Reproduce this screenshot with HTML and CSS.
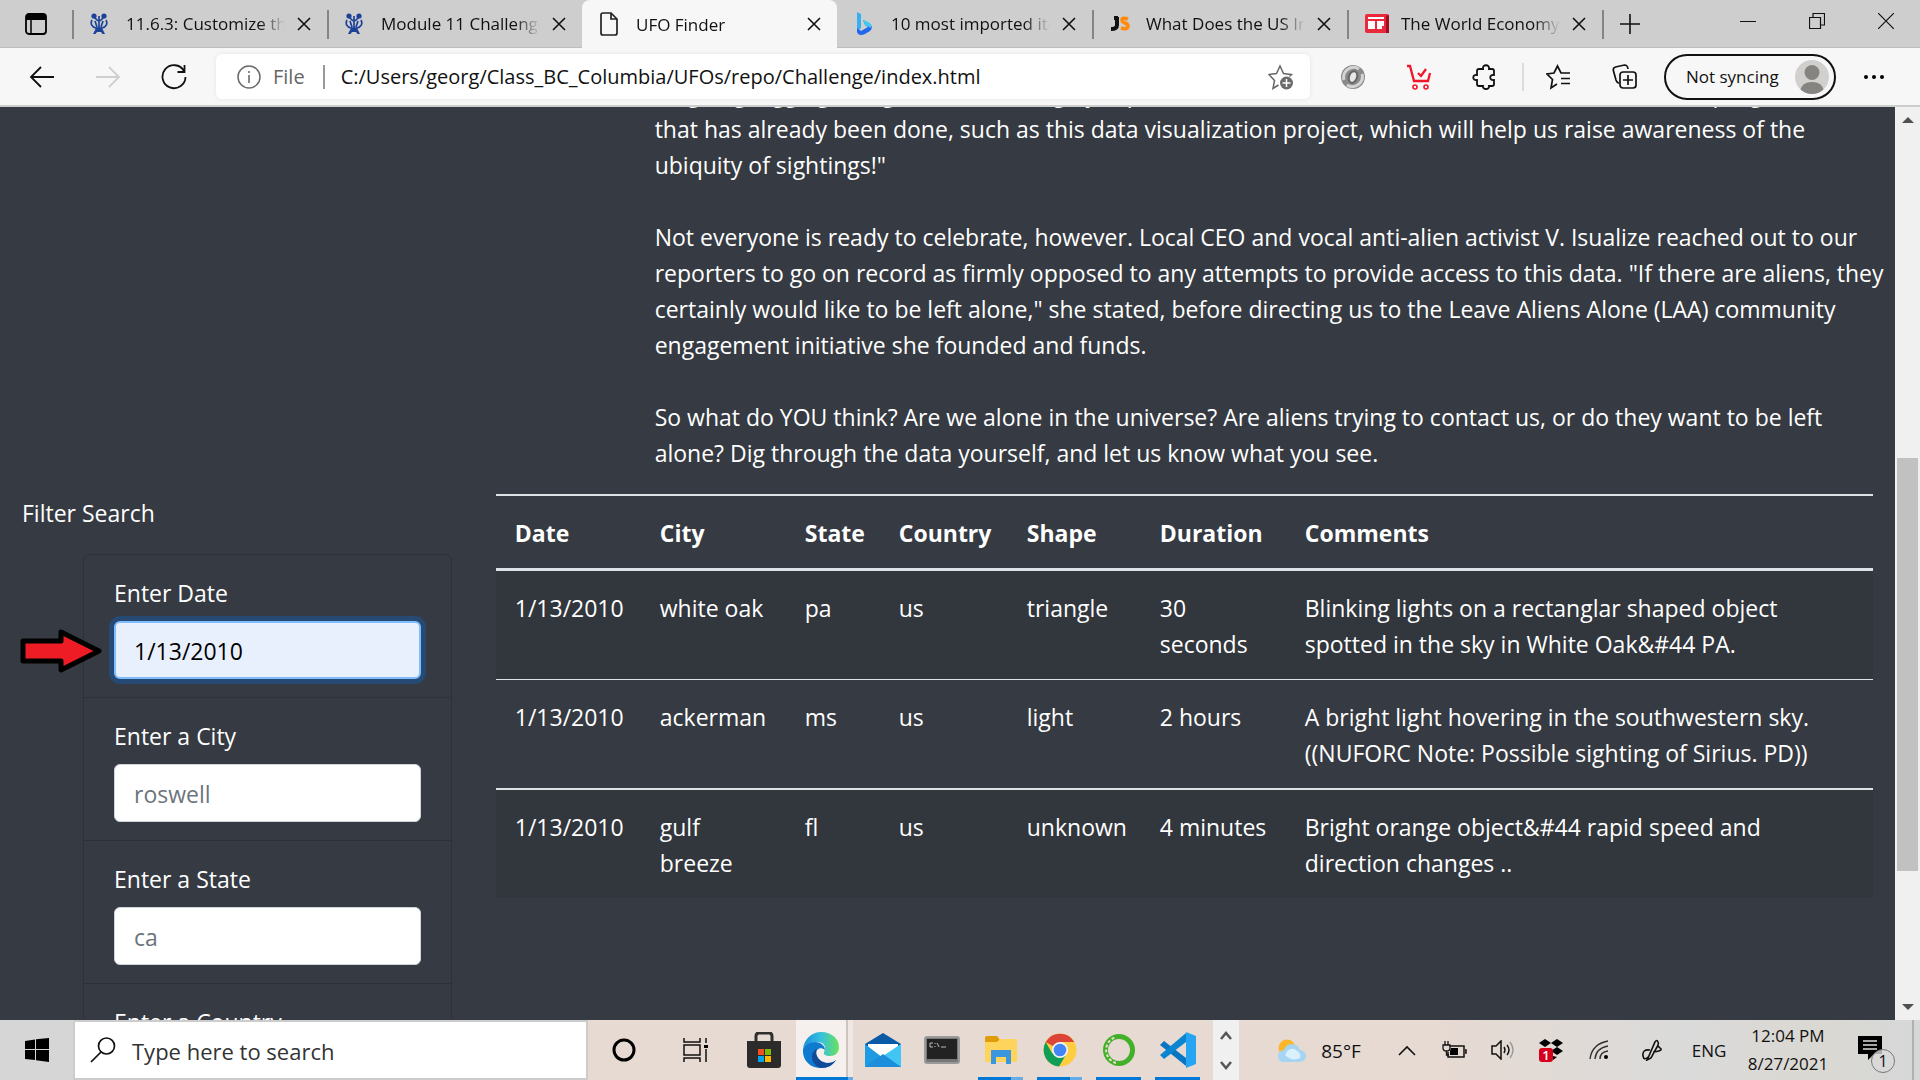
FILE: index.html
```html
<!DOCTYPE html>
<html lang="en">
<head>
<meta charset="utf-8">
<title>UFO Finder</title>
<link rel="stylesheet" href="styles.css">
</head>
<body>
<svg width="0" height="0" class="defs" aria-hidden="true">
  <defs>
    <symbol id="x" viewBox="0 0 14 14"><path d="M1 1l12 12M13 1L1 13" fill="none" stroke="#111" stroke-width="1.6"/></symbol>
    <symbol id="crown" viewBox="0 0 18 22"><g fill="#1b4199"><circle cx="4" cy="3" r="2.6"/><circle cx="14" cy="3" r="2.6"/><path d="M3 21l3-6h6l3 6h-2.500l-1.500-2H7l-1.500 2z"/></g><path d="M4 4l4 4M14 4l-4 4M9 3v12M2 7c-2 4 0 7 4 8h6c4-1 6-4 4-8M5 8l2 6M13 8l-2 6" fill="none" stroke="#1b4199" stroke-width="1.700"/></symbol>
  </defs>
</svg>
<header class="tabs">
  <button class="tab-actions" aria-label="Tab actions"><svg width="22" height="22" viewBox="0 0 22 22"><rect x="1" y="1" width="20" height="20" rx="3" fill="none" stroke="#000" stroke-width="1.800"/><path d="M1 2h20v5H1z"/><path d="M6 6v15" stroke="#000" stroke-width="1.5"/></svg></button>
  <div class="tab sep"><svg class="fav" width="18" height="22"><use href="#crown"/></svg><span class="tab-title">11.6.3: Customize the Table</span><button class="close" aria-label="Close tab"><svg width="14" height="14"><use href="#x"/></svg></button></div>
  <div class="tab sep"><svg class="fav" width="18" height="22"><use href="#crown"/></svg><span class="tab-title">Module 11 Challenge Help</span><button class="close" aria-label="Close tab"><svg width="14" height="14"><use href="#x"/></svg></button></div>
  <div class="tab active"><svg class="fav" width="18" height="24" viewBox="0 0 18 24"><path d="M3 1h8l6 6v14q0 2-2 2H3q-2 0-2-2V3q0-2 2-2zM11 1v6h6" fill="none" stroke="#222" stroke-width="1.7"/></svg><span class="tab-title">UFO Finder</span><button class="close" aria-label="Close tab"><svg width="14" height="14"><use href="#x"/></svg></button></div>
  <div class="tab"><svg class="fav" width="18" height="24" viewBox="0 0 18 24"><path d="M2 0l4 2v14l-4 4z" fill="#35b0f5"/><path d="M2 16v4q1 3 4 3 2 0 4-1l5-3q3-3 1-6-1-2-4-3l-4-2 2 5 3 2-7 4z" fill="#2268ea"/><path d="M8 8l5 2q4 2 3 6l-6-3z" fill="#3ccdf0"/></svg><span class="tab-title">10 most imported items</span><button class="close" aria-label="Close tab"><svg width="14" height="14"><use href="#x"/></svg></button></div>
  <div class="tab sep"><svg class="fav" width="20" height="16" viewBox="0 0 20 16"><path d="M4 2h4M7 1v8q0 4-6 4" fill="none" stroke="#111" stroke-width="4"/><path d="M18 3q-6-2-6 1 0 2 3 3 3 1 3 3 0 4-7 2" fill="none" stroke="#ff8a0c" stroke-width="3.500"/></svg><span class="tab-title">What Does the US Import</span><button class="close" aria-label="Close tab"><svg width="14" height="14"><use href="#x"/></svg></button></div>
  <div class="tab sep"><svg class="fav" width="24" height="20" viewBox="0 0 24 20"><rect width="24" height="19" rx="2" fill="#ea2a3c"/><path d="M21 2l3-1v18h-3z" fill="#9e1022"/><path d="M3 3h16v2H3zM3 7h7v8H3zM12 7h7v5h-2v3h-5z" fill="#fff"/></svg><span class="tab-title">The World Economy 2021</span><button class="close" aria-label="Close tab"><svg width="14" height="14"><use href="#x"/></svg></button></div>
  <div class="tab-end sep"><button class="new-tab" aria-label="New tab"><svg width="20" height="20" viewBox="0 0 20 20"><path d="M10 0v20M0 10h20" stroke="#111" stroke-width="1.6"/></svg></button></div>
  <div class="window-buttons">
    <button aria-label="Minimize"><svg width="16" height="16" viewBox="0 0 16 16"><path d="M0 8.500h16" stroke="#111"/></svg></button>
    <button aria-label="Restore"><svg width="16" height="16" viewBox="0 0 16 16"><path d="M.5 4.500h11v11H.5zM4 4V.5h11.500V12H12" fill="none" stroke="#111" stroke-width="1.200"/></svg></button>
    <button aria-label="Close"><svg width="16" height="16" viewBox="0 0 16 16"><path d="M0 0l16 16M16 0L0 16" stroke="#111" stroke-width="1.200"/></svg></button>
  </div>
</header>
<nav class="toolbar">
  <div class="nav-buttons">
    <button aria-label="Back"><svg width="26" height="24" viewBox="0 0 26 24"><path d="M12 2L2 12l10 10M2 12h23" fill="none" stroke="#111" stroke-width="1.800"/></svg></button>
    <button aria-label="Forward"><svg width="26" height="24" viewBox="0 0 26 24"><path d="M14 2l10 10-10 10M24 12H1" fill="none" stroke="#cfcfcf" stroke-width="1.800"/></svg></button>
    <button aria-label="Refresh"><svg width="26" height="26" viewBox="0 0 26 26"><path d="M23 7A11.500 11.500 0 1 0 24.500 13M23.500 1v7h-7" fill="none" stroke="#111" stroke-width="1.800"/></svg></button>
  </div>
  <div class="address">
    <svg width="24" height="24" viewBox="0 0 24 24"><circle cx="12" cy="12" r="11" fill="none" stroke="#6b6b6b" stroke-width="1.500"/><path d="M12 10v8M12 6v2" stroke="#6b6b6b" stroke-width="1.600"/></svg>
    <span class="scheme">File</span>
    <input class="url" aria-label="Address" value="C:/Users/georg/Class_BC_Columbia/UFOs/repo/Challenge/index.html">
    <button aria-label="Add to favorites"><svg width="26" height="26" viewBox="0 0 26 26"><path d="M10.500 21L5 24.500l1.500-8L1 10.500l7.500-1L12 2l3.500 7.500 8 1-2 2" fill="none" stroke="#666" stroke-width="1.500"/><circle cx="18.500" cy="19" r="6.500" fill="#6b6b6b"/><path d="M18.500 15v8M14.500 19h8" stroke="#fff" stroke-width="1.500"/></svg></button>
  </div>
  <div class="extensions">
    <button aria-label="Extension"><svg width="26" height="26" viewBox="0 0 26 26"><circle cx="13" cy="13" r="12" fill="#8b8b8b"/><path d="M4 16A10 10 0 0 1 19 5M22 10a10 10 0 0 1-15 11" fill="none" stroke="#d4d4d4" stroke-width="3"/><ellipse cx="13" cy="13" rx="4" ry="6" transform="rotate(20 13 13)" fill="#e6e6e6" stroke="#666" stroke-width="2"/></svg></button>
    <button aria-label="Shopping"><svg width="26" height="26" viewBox="0 0 26 26"><path d="M1 2h3l4 15h14l2-8M12 9l3 3 5-7" fill="none" stroke="#f4152b" stroke-width="2.300"/><circle cx="9" cy="23" r="2" fill="none" stroke="#f4152b" stroke-width="1.600"/><circle cx="20" cy="23" r="2" fill="none" stroke="#f4152b" stroke-width="1.600"/></svg></button>
    <button aria-label="Extensions"><svg width="26" height="26" viewBox="0 0 26 26"><path d="M7 5h4c-1-5 7-5 6 0h3q2 0 2 2v4c-5-1-5 6 0 5v4q0 2-2 2h-3c1 4-7 4-6 0H7q-2 0-2-2v-4c-5 1-5-6 0-5V7q0-2 2-2z" fill="none" stroke="#111" stroke-width="1.800"/></svg></button>
  </div>
  <div class="extensions bordered">
    <button aria-label="Favorites"><svg width="26" height="26" viewBox="0 0 26 26"><path d="M24 9h-9L11.500 2 8 9l-7 1 5.500 5.500L5 24l6-4M15 14.500h9M15 19.500h9" fill="none" stroke="#111" stroke-width="1.700"/></svg></button>
    <button aria-label="Collections"><svg width="26" height="26" viewBox="0 0 26 26"><path d="M7 19q-2 0-3-3L1.500 7q-1-3 2-4l9-2q3 0 3.500 4" fill="none" stroke="#111" stroke-width="1.700"/><rect x="8" y="8" width="16" height="16" rx="3" fill="none" stroke="#111" stroke-width="1.700"/><path d="M16 11v10M11 16h10" stroke="#111" stroke-width="1.700"/></svg></button>
  </div>
  <button class="profile">Not syncing<svg width="34" height="34" viewBox="0 0 34 34"><defs><clipPath id="av"><circle cx="17" cy="17" r="17"/></clipPath></defs><g clip-path="url(#av)"><path d="M0 0h34v34H0z" fill="#d2d0ce"/><circle cx="17" cy="12.500" r="7.500" fill="#868481"/><path d="M5 34q0-12 12-12t12 12z" fill="#868481"/></g></svg></button>
  <button class="more" aria-label="Settings and more"><svg width="20" height="6" viewBox="0 0 20 6"><circle cx="2" cy="3" r="2"/><circle cx="10" cy="3" r="2"/><circle cx="18" cy="3" r="2"/></svg></button>
</nav>
<div class="viewport">
  <main class="page">
    <article class="story">
      <p>be going digging along in our more highly capable, wonderful and even more ambitious amount of progress<br>that has already been done, such as this data visualization project, which will help us raise awareness of the ubiquity of sightings!"</p>
      <p>Not everyone is ready to celebrate, however. Local CEO and vocal anti-alien activist V. Isualize reached out to our reporters to go on record as firmly opposed to any attempts to provide access to this data. "If there are aliens, they certainly would like to be left alone," she stated, before directing us to the Leave Aliens Alone (LAA) community engagement initiative she founded and funds.</p>
      <p>So what do YOU think? Are we alone in the universe? Are aliens trying to contact us, or do they want to be left alone? Dig through the data yourself, and let us know what you see.</p>
    </article>
    <div class="results">
      <form class="filters">
        <p class="filters-title">Filter Search</p>
        <ul class="filter-list">
          <li><label for="date">Enter Date</label><input id="date" class="focused" value="1/13/2010">
            <svg class="arrow" width="84" height="46" viewBox="0 0 84 46"><path d="M3 13h38V4l38 19-38 19v-9H3z" fill="#ee1c24" stroke="#000" stroke-width="5" stroke-linejoin="round"/></svg></li>
          <li><label for="city">Enter a City</label><input id="city" placeholder="roswell"></li>
          <li><label for="state">Enter a State</label><input id="state" placeholder="ca"></li>
          <li><label for="country">Enter a Country</label><input id="country" placeholder="us"></li>
        </ul>
      </form>
      <div class="table-wrap">
      <table class="sightings">
        <thead><tr><th class="c-date">Date</th><th class="c-city">City</th><th class="c-state">State</th><th class="c-country">Country</th><th class="c-shape">Shape</th><th class="c-duration">Duration</th><th>Comments</th></tr></thead>
        <tbody>
          <tr><td>1/13/2010</td><td>white oak</td><td>pa</td><td>us</td><td>triangle</td><td>30 seconds</td><td>Blinking lights on a rectanglar shaped object spotted in the sky in White Oak&amp;#44 PA.</td></tr>
          <tr><td>1/13/2010</td><td>ackerman</td><td>ms</td><td>us</td><td>light</td><td>2 hours</td><td>A bright light hovering in the southwestern sky. ((NUFORC Note: Possible sighting of Sirius. PD))</td></tr>
          <tr><td>1/13/2010</td><td>gulf breeze</td><td>fl</td><td>us</td><td>unknown</td><td>4 minutes</td><td>Bright orange object&amp;#44 rapid speed and direction changes ..</td></tr>
        </tbody>
      </table>
      </div>
    </div>
  </main>
  <div class="scrollbar">
    <svg width="12" height="8" viewBox="0 0 12 8"><path d="M6 1l6 6H0z" fill="#505050"/></svg>
    <div class="track"><div class="thumb"></div></div>
    <svg width="12" height="8" viewBox="0 0 12 8"><path d="M6 7l6-6H0z" fill="#505050"/></svg>
  </div>
</div>
<footer class="taskbar">
  <button class="start" aria-label="Start"><svg width="24" height="24" viewBox="0 0 24 24"><path d="M0 3l10-1.500V11H0zM11 1.300L24 0v11H11zM0 12h10v10L0 21zM11 12h13v12l-13-1.700z"/></svg></button>
  <div class="search"><svg width="26" height="26" viewBox="0 0 26 26"><circle cx="16.500" cy="9" r="8" fill="none" stroke="#111" stroke-width="1.700"/><path d="M11 15L1 25" stroke="#111" stroke-width="1.700"/></svg><input aria-label="Search" placeholder="Type here to search"></div>
  <div class="apps">
    <button class="wide" aria-label="Cortana"><svg width="24" height="24" viewBox="0 0 24 24"><circle cx="12" cy="12" r="10" fill="none" stroke="#000" stroke-width="3"/></svg></button>
    <button class="wide" aria-label="Task View"><svg width="26" height="24" viewBox="0 0 26 24"><path d="M1 0v4h16V0M1 24v-4h16v4M1 7h16v10H1zM23 0v5M23 11v13" fill="none" stroke="#111" stroke-width="1.500"/><path d="M21 7h4v3h-4z"/></svg></button>
    <button class="medium" aria-label="Microsoft Store"><svg width="36" height="36" viewBox="0 0 36 36"><path d="M10 9V4q0-3 3-3h10q3 0 3 3v5" fill="none" stroke="#2e2e2e" stroke-width="3"/><path d="M1 9h34v24q0 3-3 3H4q-3 0-3-3z" fill="#2b2b2b"/><path d="M12 17h6v6h-6z" fill="#f25022"/><path d="M19 17h6v6h-6z" fill="#7fba00"/><path d="M12 24h6v6h-6z" fill="#00a4ef"/><path d="M19 24h6v6h-6z" fill="#ffb900"/></svg></button>
    <button class="edge" aria-label="Microsoft Edge"><svg width="36" height="36" viewBox="0 0 36 36"><defs><linearGradient id="eg" x1="0" x2="1"><stop offset="0" stop-color="#1b8fdb"/><stop offset=".5" stop-color="#35c1e0"/><stop offset="1" stop-color="#6be25a"/></linearGradient></defs><path d="M0 17C1 7 9 0 18 0c11 0 18 7 18 15 0 6-4 9-9 9-5 0-7-2-6-4 3-5 0-10-7-10C7 10 2 13 0 17z" fill="url(#eg)"/><path d="M0 17c2-4 6-7 12-7 6 0 10 4 10 8-5-4-10 0-9 5 1 5 6 8 12 8 4 0 6-1 8-3-3 5-8 8-15 8C7 36-1 28 0 17z" fill="#0f7bd0"/><path d="M14 17c-3 7 4 14 11 14 3 0 6-1 8-3-3 5-8 8-15 8-5-1-9-6-9-11 0-4 2-7 5-8z" fill="#104a98"/></svg></button>
    <button aria-label="Mail"><svg width="38" height="36" viewBox="0 0 38 36"><path d="M1 12L19 1l18 11v6H1z" fill="#0a5aa8"/><path d="M4 12h30v14H4z" fill="#fff"/><path d="M1 12l18 14 18-14v23H1z" fill="#1f9be4"/><path d="M37 12v23L19 24z" fill="#40c5f5"/><path d="M1 35l18-13 18 13z" fill="#1c8edb"/></svg></button>
    <button aria-label="Command Prompt"><svg width="36" height="28" viewBox="0 0 36 28"><rect x="1" y="1" width="34" height="26" rx="2" fill="#777" stroke="#9a9a9a" stroke-width="2"/><path d="M3 3h30v20H3z" fill="#222"/><path d="M9 7H6v4h3M11 7v1M11 10v1M13 7l2 4M17 11h5" fill="none" stroke="#bbb"/></svg></button>
    <button class="open many" aria-label="File Explorer"><svg width="34" height="28" viewBox="0 0 34 28"><path d="M1 2q0-2 2-2h10l3 4v5H1z" fill="#e09c06"/><path d="M1 6h12l3-3h17v23H1z" fill="#ffd45c"/><path d="M7 14h20v14h-5v-7h-10v7H7z" fill="#3a96dd"/></svg></button>
    <button class="open many" aria-label="Google Chrome"><svg width="34" height="34" viewBox="0 0 34 34"><circle cx="17" cy="17" r="16.500" fill="#ffcd41"/><path d="M17 17L2.700 9A16.500 16.500 0 0 1 31.300 9H17z" fill="#db4437"/><path d="M2.700 9A16.500 16.500 0 0 0 16 33.500L24 20l-7 4-8-4z" fill="#0f9d58"/><circle cx="17" cy="17" r="8" fill="#f4f4f4"/><circle cx="17" cy="17" r="6.300" fill="#4285f4"/></svg></button>
    <button class="open" aria-label="Anaconda"><svg width="34" height="34" viewBox="0 0 34 34"><circle cx="17" cy="17" r="13.500" fill="none" stroke="#43b02a" stroke-width="5"/><path d="M14 30A13.500 13.500 0 0 1 14 4" fill="none" stroke="#e6dad2" stroke-width="2" stroke-dasharray="3 2"/></svg></button>
    <button class="open" aria-label="Visual Studio Code"><svg width="36" height="36" viewBox="0 0 36 36"><path d="M4 9l22 17v8L0 13z" fill="#0a75c2"/><path d="M26 1v9L4 27l-4-4z" fill="#0a85d1"/><path d="M26 0l10 4v28l-10 4z" fill="#27a4f2"/></svg></button>
  </div>
  <div class="app-scroll">
    <button aria-label="Scroll up"><svg width="12" height="9" viewBox="0 0 12 9"><path d="M1 8l5-6 5 6" fill="none" stroke="#555" stroke-width="2.500"/></svg></button>
    <button aria-label="Scroll down"><svg width="12" height="9" viewBox="0 0 12 9"><path d="M1 1l5 6 5-6" fill="none" stroke="#555" stroke-width="2.500"/></svg></button>
  </div>
  <div class="tray">
    <button class="weather"><svg width="30" height="24" viewBox="0 0 30 24"><circle cx="10" cy="9" r="8.500" fill="#fbb72c"/><path d="M7 23q-6 0-6-6 0-5 6-6 2-6 8-6t8 6q6 1 6 6t-6 6z" fill="#a5d5f3"/><path d="M8 16q4-9 11-5 6 4 4 8-8 4-15-3z" fill="#d9f0fd"/></svg>85°F</button>
    <button aria-label="Show hidden icons"><svg width="18" height="11" viewBox="0 0 18 11"><path d="M1 10l8-8 8 8" fill="none" stroke="#111" stroke-width="1.600"/></svg></button>
    <button aria-label="Battery"><svg width="26" height="18" viewBox="0 0 26 18"><path d="M8 5h14v11H6v-5M23 9h1v3h-1" fill="none" stroke="#111" stroke-width="1.500"/><path d="M9 7h7v7H8v-4z"/><path d="M1 4h7v3q0 3-3.500 3T1 7zM3 4V0M6 4V0M4.500 10v4H7" fill="none" stroke="#111" stroke-width="1.300"/></svg></button>
    <button aria-label="Volume"><svg width="24" height="20" viewBox="0 0 24 20"><path d="M1 6h4l5-5v18l-5-5H1z" fill="none" stroke="#111" stroke-width="1.500"/><path d="M13 7q2 3 0 6M16 5q4 5 0 10" fill="none" stroke="#111" stroke-width="1.400"/><path d="M19 2q6 8 0 16" fill="none" stroke="#999" stroke-width="1.400"/></svg></button>
    <button class="dropbox" aria-label="Dropbox"><svg width="24" height="22" viewBox="0 0 24 22"><path d="M0 4l6-4 6 4 6-4 6 4-6 4-6-4-6 4zM12 12l6-4 6 4-6 4zM14 17l4 1-4 3z"/></svg><span class="count">1</span></button>
    <button aria-label="Network"><svg width="20" height="20" viewBox="0 0 20 20"><path d="M1 19Q3 4 19 1M6 19q1-11 13-13M11 19q0-7 8-8" fill="none" stroke="#333" stroke-width="1.400"/><circle cx="17" cy="17" r="2"/></svg></button>
    <button class="pen" aria-label="Pen"><svg width="22" height="22" viewBox="0 0 22 22"><path d="M7 19L14 3q2-3 3 0 1 2-1 5l-6 11-4 2zM9 11q-8-1-7 6 1 5 5 1M12 13q9-1 8-3l-3-3" fill="none" stroke="#111" stroke-width="1.600"/></svg></button>
    <button class="lang">ENG</button>
    <button class="clock"><span>12:04 PM</span><span>8/27/2021</span></button>
    <button class="notify" aria-label="Notifications"><svg width="24" height="24" viewBox="0 0 24 24"><path d="M0 0h24v18H16l-6 6v-6H0z"/><path d="M5 5h14M5 9h14M5 13h14" stroke="#ddd" stroke-width="1.300"/></svg><span class="badge">1</span></button>
  </div>
</footer>
</body>
</html>
```
FILE: styles.css
```css
* { box-sizing: border-box; }

body {
  margin: 0;
  height: 100vh;
  display: flex;
  flex-direction: column;
  overflow: hidden;
  font-family: "Open Sans", "Noto Sans", sans-serif;
  color: #111;
}

.defs { position: absolute; }
svg { display: block; flex: none; }

button {
  border: 0;
  padding: 0;
  background: none;
  font: inherit;
  color: inherit;
  display: flex;
  align-items: center;
  justify-content: center;
}

input { font: inherit; color: inherit; min-width: 0; }

/* Browser tabs */
.tabs {
  flex: none;
  display: flex;
  height: 48px;
  background: #cecece;
  border-bottom: 1px solid #bdbdbd;
  font-size: 17px;
}

.tab-actions { width: 72px; }

.tab {
  display: grid;
  grid-template-columns: 36px 1fr 14px;
  align-items: center;
  flex: 0 1 255px;
  min-width: 0;
  padding: 0 16px 0 18px;
  position: relative;
}

.tab-end { display: flex; width: 56px; position: relative; }
.new-tab { width: 56px; }

.sep::before {
  content: "";
  position: absolute;
  left: 0;
  top: 10px;
  bottom: 8px;
  width: 2px;
  background: #858585;
}

.tab.active {
  height: 48px;
  background: #f7f7f7;
  border-radius: 8px 8px 0 0;
}

.tab-title {
  margin-right: 12px;
  overflow: hidden;
  white-space: nowrap;
  -webkit-mask-image: linear-gradient(to right, #000 84%, transparent);
  mask-image: linear-gradient(to right, #000 84%, transparent);
}

.window-buttons { display: flex; margin-left: auto; height: 42px; }
.window-buttons button { width: 69px; }

/* Toolbar */
.toolbar {
  flex: none;
  display: flex;
  align-items: center;
  height: 59px;
  padding-right: 8px;
  background: #f7f7f7;
  border-bottom: 2px solid #cdcdcd;
}

.nav-buttons { display: flex; padding: 0 9px; }
.nav-buttons button { width: 66px; height: 44px; }

.address {
  flex: 1;
  display: flex;
  align-items: center;
  height: 45px;
  padding: 0 16px 0 21px;
  background: #fff;
  border-radius: 6px;
  box-shadow: 0 0 4px #e4e4e4;
  font-size: 20px;
}

.scheme {
  margin-left: 12px;
  padding-right: 18px;
  color: #666;
  border-right: 2px solid #999;
  line-height: 24px;
}

.url { flex: 1; border: 0; outline: 0; padding: 0 0 0 16px; background: none; }

.extensions { display: flex; padding: 0 4px 0 10px; }
.extensions button { width: 66px; height: 28px; }
.extensions.bordered { position: relative; padding: 0 6px 0 4px; }
.extensions.bordered::before {
  content: "";
  position: absolute;
  left: 0;
  width: 2px;
  height: 28px;
  background: #dcdcdc;
}

.profile {
  height: 46px;
  width: 172px;
  justify-content: flex-start;
  padding-left: 20px;
  gap: 16px;
  border: 2px solid #111;
  border-radius: 24px;
  font-size: 17px;
}

.more { width: 76px; height: 40px; }

/* Page */
.viewport { flex: 1; min-height: 0; display: flex; }

.page {
  flex: 1;
  overflow: hidden;
  background: #363a42;
  color: #fff;
  font-size: 23px;
  line-height: 36px;
}

/* The article is scrolled up under the toolbar */
.story {
  margin: -32px 4px 0 calc(100% / 3);
  padding-left: 23px;
}

.story p { margin: 0 0 36px; }
.story p:last-child { margin-bottom: 23px; }

.results { display: grid; grid-template-columns: 1fr 3fr; }

.filters { padding: 1px 22px 0; }
.filters-title { margin: 0 0 23px; }

.filter-list {
  list-style: none;
  margin: 0 0 0 61px;
  padding: 0;
  border: 1px solid #2e3238;
  border-radius: 6px;
}

.filter-list li {
  position: relative;
  padding: 20px 30px 18px;
}

.filter-list li + li { border-top: 1px solid #2e3238; }

.filter-list label { display: block; margin-bottom: 10px; }

.filter-list input {
  display: block;
  width: 100%;
  height: 58px;
  padding: 2px 19px 0;
  border: 1px solid #ced4da;
  border-radius: 6px;
  background: #fff;
  color: #000;
}

.filter-list input::placeholder { color: #6c757d; opacity: 1; }

.filter-list .focused {
  background: #e8f0fe;
  border: 2px solid #80bdff;
  box-shadow: 0 0 0 5px #264a73;
  padding: 2px 18px 0;
}

.arrow { position: absolute; left: -64px; top: 73px; }

.table-wrap { padding: 0 22px; }

.sightings {
  width: 100%;
  table-layout: fixed;
  border-spacing: 0;
  text-align: left;
}

.c-date, .c-city, .c-duration { width: 145px; }
.c-state { width: 94px; }
.c-country { width: 128px; }
.c-shape { width: 133px; }

.sightings th { padding: 19px 0 17px 19px; border-top: 2px solid #dee2e6; border-bottom: 3px solid #dee2e6; }
.sightings td { padding: 19px 18px 17px 19px; vertical-align: top; }
.sightings tbody tr:nth-child(odd) { background: #32363d; }
.sightings tr:nth-child(2) td { border-top: 1px solid #dee2e6; }
.sightings tr:nth-child(3) td { border-top: 2px solid #dee2e6; }

.scrollbar {
  width: 25px;
  display: flex;
  flex-direction: column;
  align-items: center;
  padding: 9px 2px;
  gap: 7px;
  background: #f0f0f0;
}

.track { flex: 1; align-self: stretch; display: grid; grid-template-rows: 327fr 414fr 125fr; }
.thumb { grid-row: 2; background: #c1c1c1; }

/* Taskbar */
.taskbar {
  flex: none;
  display: flex;
  height: 60px;
  background: linear-gradient(to right, #d6d6d6 3%, #e6dad2 30%, #e6dad2 75%, #dadada 88%, #dad8d2 94%, #d6d8d8);
}

.start { width: 73px; }

.search {
  flex: 1;
  display: flex;
  align-items: center;
  gap: 16px;
  padding-left: 15px;
  background: #fff;
  border: 2px solid #cccccc;
  font-size: 22px;
}

.search input { flex: 1; border: 0; outline: 0; padding: 2px 0 0; background: none; }
.search input::placeholder { color: #333; opacity: 1; }

.apps { display: flex; padding-right: 6px; }
.apps button { width: 59px; position: relative; }
.apps .wide { width: 72px; }
.apps .medium { width: 64px; }
.apps .edge {
  width: 57px;
  padding-right: 7px;
  background: linear-gradient(to right, #f5f0ed 50px, #cfc4be 50px, #cfc4be 52px, #efe7e2 52px);
}

.open::after, .edge::after {
  content: "";
  position: absolute;
  left: 7px;
  right: 7px;
  bottom: 0;
  height: 3px;
  background: #0078d7;
}
.many::after { background: linear-gradient(to right, #0078d7 33px, #66ade8 33px); }
.edge::after { left: 0; right: 0; background: linear-gradient(to right, #0078d7 52px, #66ade8 52px); }

.app-scroll {
  width: 26px;
  display: flex;
  flex-direction: column;
  justify-content: space-around;
  align-items: center;
  background: #f0f0f0;
}

.tray { display: flex; padding-right: 6px; }
.tray button { width: 48px; }
.tray .weather { width: 144px; gap: 14px; font-size: 19px; padding: 2px 0 0 16px; }
.tray .pen { width: 58px; }
.tray .lang { width: 56px; font-size: 17px; }
.tray .clock {
  width: 102px;
  flex-direction: column;
  font-size: 17px;
  line-height: 28px;
}
.tray .notify { width: 75px; padding-right: 11px; position: relative; border-right: 2px solid #b0b0b0; }
.notify svg { margin-bottom: 4px; }

.badge {
  position: absolute;
  left: 32px;
  top: 29px;
  width: 24px;
  height: 24px;
  border: 1px solid #777;
  border-radius: 50%;
  background: #dadadacc;
  font-size: 16px;
  line-height: 22px;
}

.dropbox { position: relative; }
.count {
  position: absolute;
  left: 12px;
  top: 28px;
  width: 14px;
  height: 14px;
  border-radius: 3px;
  background: #d6001c;
  color: #fff;
  font-size: 13px;
  line-height: 14px;
  font-weight: 600;
}
```
